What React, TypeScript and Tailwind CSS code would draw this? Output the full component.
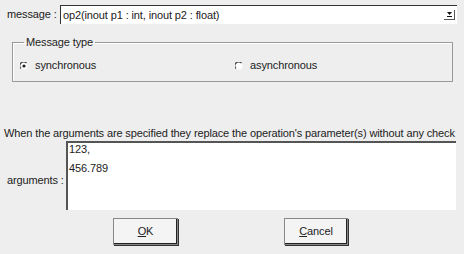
import { useState } from 'react';

function Radio({ checked }: { checked: boolean }) {
  return (
    <svg width="8" height="8" viewBox="0 0 8 8" className="shrink-0">
      <circle cx="4" cy="4" r="3.5" fill="#ffffff" />
      <path d="M1 6.5 A3.5 3.5 0 0 1 6.5 1" fill="none" stroke="#444" strokeWidth="1.2" />
      {checked && <circle cx="4" cy="4" r="1.6" fill="#222" />}
    </svg>
  );
}

export default function App() {
  const [sync, setSync] = useState(true);

  return (
    <div className="w-[464px] h-[254px] bg-[#eeeeee] text-[#222] text-[11px] leading-[13px] tracking-[-0.12px] font-['Liberation_Sans',Arial,sans-serif] flex flex-col overflow-hidden">
      {/* message combo */}
      <div className="flex items-center pt-[5px] pl-[7px] pr-[7px]">
        <span className="w-[53px]">message :</span>
        <div className="flex-1 h-[19px] bg-white border-l border-t border-[#333] flex items-center pl-[2px] pr-[2px]">
          <span className="flex-1">op2(inout p1 : int, inout p2 : float)</span>
          <div className="w-[11px] h-[10px] border-r border-b border-[#555] flex flex-col items-center justify-center gap-[1px]">
            <svg width="5" height="3" viewBox="0 0 5 3">
              <path d="M0 0 H5 L2.5 3 Z" fill="#111" />
            </svg>
            <div className="w-[5px] h-px bg-[#111]" />
          </div>
        </div>
      </div>

      {/* message type group */}
      <fieldset className="ml-[12px] w-[441px] mt-[12px] h-[46px] border border-[#999] shadow-[inset_1px_1px_0_#fff] px-[7px] pb-0 m-0">
        <legend className="px-[2px] ml-[4px] leading-[13px]">Message type</legend>
        <div className="flex items-center mt-[10px]">
          <label className="flex items-center gap-[7px] w-[215px]" onClick={() => setSync(true)}>
            <Radio checked={sync} />
            <span>synchronous</span>
          </label>
          <label className="flex items-center gap-[7px]" onClick={() => setSync(false)}>
            <Radio checked={!sync} />
            <span>asynchronous</span>
          </label>
        </div>
      </fieldset>

      <div className="mt-[45px] pl-[4px] whitespace-nowrap">
        When the arguments are specified they replace the operation's parameter(s) without any check
      </div>

      {/* arguments */}
      <div className="flex items-center mt-[1px] pl-[7px]">
        <span className="w-[59px] pt-[9px]">arguments :</span>
        <div className="w-[390px] h-[69px] bg-white border-t-2 border-l-2 border-[#555] pl-[1px] flex flex-col gap-[6px]">
          <div>123,</div>
          <div>456.789</div>
        </div>
      </div>

      {/* buttons */}
      <div className="flex mt-[8px]">
        <button className="ml-[113px] w-[65px] h-[27px] bg-[#f4f4f4] border border-[#888] shadow-[inset_-1px_-1px_0_#222,1px_1px_0_#333] flex items-center justify-center">
          <span><u>O</u>K</span>
        </button>
        <button className="ml-[106px] w-[64px] h-[27px] bg-[#f4f4f4] border border-[#888] shadow-[inset_-1px_-1px_0_#222,1px_1px_0_#333] flex items-center justify-center">
          <span><u>C</u>ancel</span>
        </button>
      </div>
    </div>
  );
}
